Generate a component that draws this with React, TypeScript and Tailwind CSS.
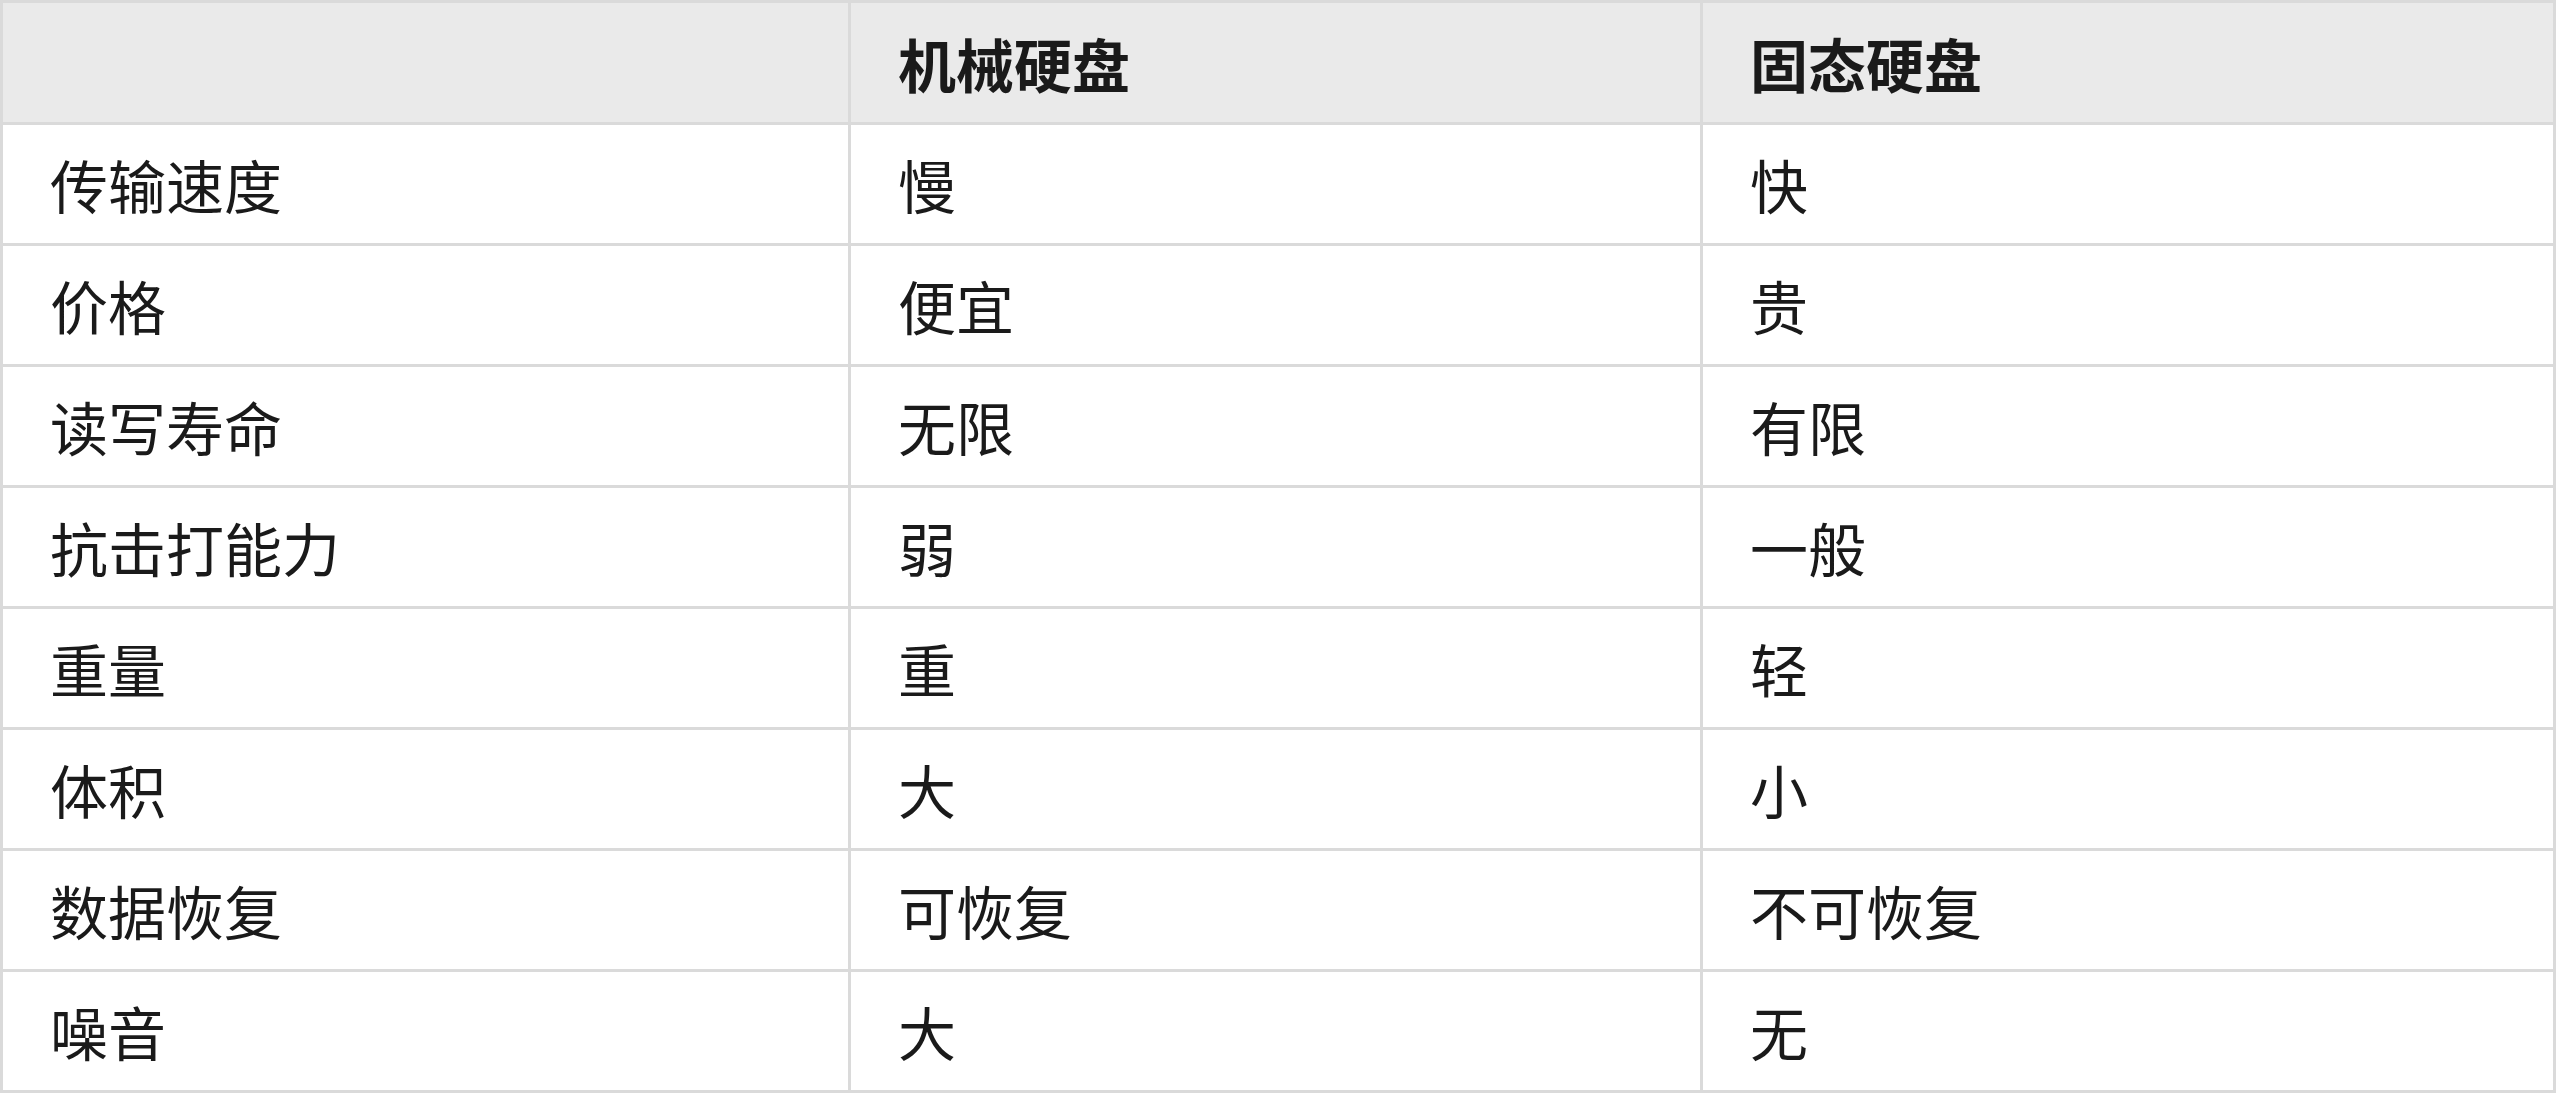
const headers = ["", "机械硬盘", "固态硬盘"];

const rows: [string, string, string][] = [
  ["传输速度", "慢", "快"],
  ["价格", "便宜", "贵"],
  ["读写寿命", "无限", "有限"],
  ["抗击打能力", "弱", "一般"],
  ["重量", "重", "轻"],
  ["体积", "大", "小"],
  ["数据恢复", "可恢复", "不可恢复"],
  ["噪音", "大", "无"],
];

export default function App() {
  return (
    <div
      className="min-h-screen bg-white text-[#1a1a1a]"
      style={{ fontFamily: '"Noto Sans CJK SC", "Noto Sans", sans-serif' }}
    >
      <div className="w-[2556px] bg-[#dadada] p-[3px] grid grid-cols-[845px_849px_850px] gap-[3px] grid-rows-[119px_repeat(8,118px)]">
        {headers.map((h, i) => (
          <div
            key={"h" + i}
            className="bg-[#eaeaea] flex items-center pl-[47px] text-[58px] font-bold leading-none"
          >
            {h}
          </div>
        ))}
        {rows.map((row, r) =>
          row.map((cell, c) => (
            <div
              key={r + "-" + c}
              className="bg-white flex items-center pl-[47px] text-[58px] leading-none"
            >
              {cell}
            </div>
          ))
        )}
      </div>
    </div>
  );
}
